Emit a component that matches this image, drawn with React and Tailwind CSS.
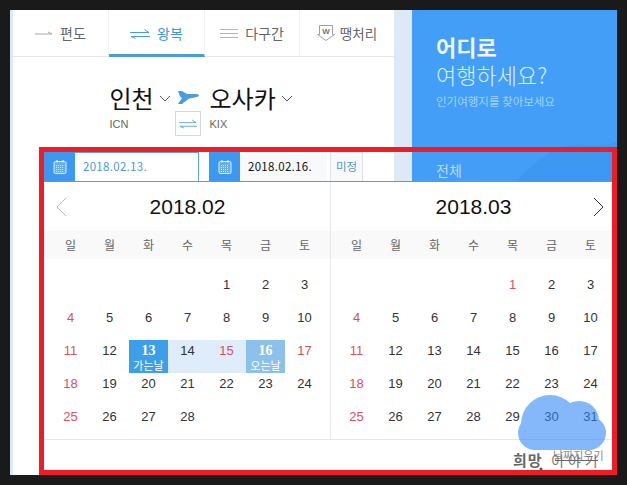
const KR = { fontFamily: '"Noto Sans CJK KR", "Noto Sans", sans-serif' };
const LS = { fontFamily: '"Liberation Sans", "Noto Sans CJK KR", sans-serif' };

function Swap({ color, w = 20 }) {
  return (
    <svg width={w} height="12" viewBox="0 0 20 12" fill="none" stroke={color} strokeWidth="1">
      <path d="M0 4.5H19L14.5 1.5" />
      <path d="M20 8.5H1L5.5 10.5" />
    </svg>
  );
}

function CalIcon() {
  return (
    <svg width="14" height="16" viewBox="0 0 14 16" fill="none" stroke="#ffffff" strokeWidth="1">
      <rect x="1" y="2.5" width="12" height="12" rx="1.5" fill="#ffffff" fillOpacity="0.25" opacity="0.85" />
      <path d="M4 1v2.5M10 1v2.5" />
      <path d="M3 6.5h8M3 8.5h8M3 10.5h8M3 12.5h8" strokeDasharray="1 1" opacity="0.75" />
    </svg>
  );
}

function Chevron() {
  return (
    <svg width="12" height="7" viewBox="0 0 12 7" fill="none" stroke="#555555" strokeWidth="1">
      <path d="M1 1l5 5 5-5" />
    </svg>
  );
}

function Tab({ active, icon, label, w }) {
  return (
    <div
      className={`flex items-center justify-center gap-[7px] h-[47px] text-[14px] border-r border-[#eef0f2] ${
        active ? "text-[#3f97e6] border-b-[3px] border-b-[#4a9be0] pt-[3px]" : "text-[#666666] border-b border-b-[#e4e6e8]"
      } ${w}`}
      style={KR}
    >
      {icon}
      <span>{label}</span>
    </div>
  );
}

function Day({ d, red, kind, label, range }) {
  const bg =
    kind === "go" ? "bg-[#3d9fe8]" : kind === "back" ? "bg-[#8cc1ec]" : range ? "bg-[#deedf9]" : "";
  const color = kind ? "text-white" : red ? "text-[#d9505f]" : "text-[#333333]";
  return (
    <div className={`h-[33px] flex flex-col items-center pt-[3px] ${bg} ${color}`}>
      {kind ? (
        <>
          <span className="text-[14px] leading-[15px] font-bold" style={{ fontFamily: '"Liberation Serif", serif' }}>{d}</span>
          <span className="text-[11px] leading-[14px]" style={KR}>{label}</span>
        </>
      ) : (
        <span className="text-[13px] leading-[15px]" style={LS}>{d}</span>
      )}
    </div>
  );
}

function Month({ title, blanks, days, nav, cls, headCls, highlight }) {
  const week = ["일", "월", "화", "수", "목", "금", "토"];
  const cells = [];
  for (let i = 0; i < blanks; i++) cells.push(<div key={"b" + i} className="h-[33px]" />);
  for (let d = 1; d <= days; d++) {
    const idx = (blanks + d - 1) % 7;
    const red = idx === 0 || (highlight && (d === 15 || d === 17)) || (!highlight && d === 1);
    cells.push(
      <Day
        key={d}
        d={d}
        red={red}
        kind={highlight && d === 13 ? "go" : highlight && d === 16 ? "back" : null}
        label={d === 13 ? "가는날" : "오는날"}
        range={highlight && (d === 14 || d === 15)}
      />
    );
  }
  return (
    <div className={`relative flex flex-col ${cls}`}>
      <div className="h-[50px] flex items-center justify-center text-[21px] text-[#111111]" style={LS}>
        {nav}
        <span>{title}</span>
      </div>
      <div className={`h-[28px] bg-[#f9f9f9] grid grid-cols-7 items-center text-[12px] text-[#666666] text-center ${headCls}`} style={KR}>
        {week.map((w) => (
          <span key={w}>{w}</span>
        ))}
      </div>
      <div className="grid grid-cols-7 pt-[15px]">{cells}</div>
    </div>
  );
}

export default function App() {
  return (
    <div className="w-[627px] h-[485px] bg-[#1a1a1a] pt-[10px] pl-[10px] overflow-hidden">
      <div className="relative w-[607px] h-[465px] bg-[#dde9f6] pl-[3px] flex overflow-hidden">
        <div className="w-[381px] h-full bg-white flex flex-col">
          <div className="flex">
            <Tab
              w="w-[96px]"
              label="편도"
              icon={
                <svg width="18" height="6" viewBox="0 0 18 6" fill="none" stroke="#a8a8a8" strokeWidth="1">
                  <path d="M0 4H17L13 2" />
                </svg>
              }
            />
            <Tab w="w-[96px]" active label="왕복" icon={<Swap color="#4a9be0" />} />
            <Tab
              w="w-[95px]"
              label="다구간"
              icon={
                <svg width="18" height="11" viewBox="0 0 18 11" fill="none" stroke="#b4b4b4" strokeWidth="1">
                  <path d="M0 1.5h18M0 5.5h18M0 9.5h18" />
                </svg>
              }
            />
            <div className="flex-1 h-[47px] flex items-center justify-center gap-[5px] text-[13.5px] text-[#666666] border-b border-[#e4e6e8]" style={KR}>
              <svg width="18" height="18" viewBox="0 0 18 18" fill="none" stroke="#a0a0a0" strokeWidth="1">
                <path d="M2.5 1.5h13v9h2L9 16.5 0.5 10.5h2z" />
                <text x="9" y="10" fontSize="8" textAnchor="middle" fill="#777777" stroke="none" fontWeight="700" style={LS}>W</text>
              </svg>
              <span>땡처리</span>
            </div>
          </div>
          <div className="flex justify-center pt-[25px] pl-[2px]">
            <div className="flex flex-col w-[66px]">
              <div className="flex items-center gap-[5px] h-[32px] text-[24px] text-[#111111] whitespace-nowrap" style={KR}>
                <span>인천</span>
                <Chevron />
              </div>
              <span className="text-[11px] text-[#666666] leading-[14px] mt-[3px]" style={LS}>ICN</span>
            </div>
            <div className="flex flex-col items-center w-[34px] -ml-[5px] mr-[4px]">
              <svg width="22" height="14" viewBox="0 0 22 14" className="mt-[8px]" fill="#4a9be0">
                <path d="M1 1L5 1L10 4L19 4C21 4 22 5 22 5.5C22 6.5 20 7 18 7.5L12 8.5L5 14L1 14L5 8L3 6.5Z" />
              </svg>
              <div className="w-[26px] h-[25px] mt-[7px] border border-[#d5d9dd] flex items-center justify-center bg-white">
                <Swap color="#5aa5dc" w={18} />
              </div>
            </div>
            <div className="flex flex-col w-[90px] ml-[1px]">
              <div className="flex items-center gap-[5px] h-[32px] text-[24px] text-[#111111] whitespace-nowrap" style={KR}>
                <span>오사카</span>
                <Chevron />
              </div>
              <span className="text-[11px] text-[#666666] leading-[14px] mt-[3px]" style={LS}>KIX</span>
            </div>
          </div>
        </div>
        <div className="w-[18px]" />
        <div className="relative w-[205px] h-full bg-[#439ef8] pl-[24px] pt-[22px] text-white overflow-hidden" style={KR}>
          <svg className="absolute left-0 top-[130px]" width="205" height="50" viewBox="0 0 205 50" fill="#3d98f4">
            <path d="M95 50C120 25 135 10 155 6c15-3 30 2 50-4v48z" />
          </svg>
          <div className="relative text-[22px] font-bold leading-[28px] text-[#eef7ff]">어디로</div>
          <div className="relative text-[22px] font-light leading-[29px] text-[#dcefff]">여행하세요?</div>
          <div className="relative text-[11.5px] leading-[16px] mt-[4px] text-[#a5d2fb]">인기여행지를 찾아보세요</div>
          <div className="relative text-[14px] mt-[51px] text-[#b9dcfc]">전체</div>
        </div>
        <div className="absolute left-[29px] top-[137px] w-[578px] h-[328px] border-[5px] border-[#ee1c25] bg-transparent flex flex-col">
          <div className="flex h-[29px] w-full">
            <div className="w-[31px] bg-[#3d99ef] flex items-center justify-center"><CalIcon /></div>
            <div className="w-[124px] bg-white border-t border-r border-[#5aa5dc] flex items-center pl-[8px] text-[11.5px] text-[#4d9ac9] tracking-[0.3px]" style={KR}>2018.02.13.</div>
            <div className="w-[10px] bg-white" />
            <div className="w-[31px] bg-[#3d99ef] flex items-center justify-center"><CalIcon /></div>
            <div className="w-[87px] bg-[#f8f9fb] flex items-center pl-[8px] text-[11.5px] text-[#111111] tracking-[0.3px]" style={KR}>2018.02.16.</div>
            <div className="w-[3px] bg-white" />
            <div className="w-[33px] bg-[#f8f9fb] border border-b-0 border-[#dfe3e6] flex items-center justify-center text-[11.5px] text-[#4d9ac9]" style={KR}>미정</div>
            <div className="flex-1 bg-transparent" />
          </div>
          <div className="flex-1 bg-white border-t border-[#8a8f93] flex flex-col">
            <div className="flex h-[258px] border-b border-[#e4e6e8]">
              <Month
                title="2018.02"
                blanks={4}
                days={28}
                cls="w-[287px] pl-[7px] pr-[6px] border-r border-[#e6e8ea]"
                headCls="-ml-[6px] -mr-[6px] pl-[6px] pr-[6px]"
                highlight
                nav={
                  <svg className="absolute left-[11px] top-[15px]" width="12" height="20" viewBox="0 0 12 20" fill="none" stroke="#b8b8b8" strokeWidth="1">
                    <path d="M11 1L2 10l9 9" />
                  </svg>
                }
              />
              <Month
                title="2018.03"
                blanks={4}
                days={31}
                cls="flex-1 pl-[6px] pr-[2px]"
                headCls="-ml-[6px] -mr-[2px] pl-[6px] pr-[2px]"
                nav={
                  <svg className="absolute right-[7px] top-[15px]" width="12" height="20" viewBox="0 0 12 20" fill="none" stroke="#333333" strokeWidth="1">
                    <path d="M1 1l9 9-9 9" />
                  </svg>
                }
              />
            </div>
            <div className="flex-1" />
          </div>
        </div>
        <svg className="absolute left-[508px] top-[385px] opacity-[0.58]" width="88" height="55" viewBox="0 0 88 55" fill="#2e86f8">
          <circle cx="32" cy="29" r="29" />
          <circle cx="61" cy="26" r="20" />
          <circle cx="17" cy="38" r="17" />
          <circle cx="71" cy="38" r="17" />
          <rect x="17" y="30" width="54" height="25" />
        </svg>
        <span className="absolute left-[543px] top-[438px] text-[11px] leading-[14px] text-[#8a8a8a]" style={KR}>날짜지우기</span>
        <span className="absolute left-[503px] top-[440px] text-[15px] leading-[20px] font-bold text-[#666666] whitespace-nowrap tracking-[1px]" style={KR}>희망</span>
        <span className="absolute left-[541px] top-[441px] text-[14px] leading-[18px] text-[#777777] whitespace-nowrap tracking-[4px]" style={KR}>이야기</span>
        <svg className="absolute left-[525px] top-[445px]" width="65" height="16" viewBox="0 0 65 16" fill="#555555" stroke="#666666">
          <path d="M20 5.5H63" fill="none" />
          <circle cx="6" cy="14" r="1.5" stroke="none" />
        </svg>
      </div>
    </div>
  );
}
